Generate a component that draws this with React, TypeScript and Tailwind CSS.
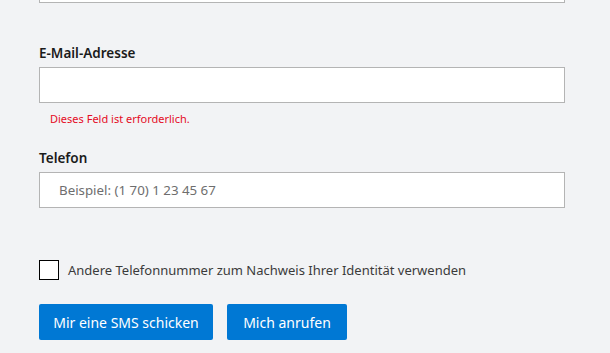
import React, { useState } from "react";

const App: React.FC = () => {
  const [email, setEmail] = useState("");
  const [phone, setPhone] = useState("");
  const [otherNumber, setOtherNumber] = useState(false);

  return (
    <div
      className="min-h-screen w-full bg-[#f2f3f5] text-[#1b1b1b]"
      style={{ fontFamily: '"Noto Sans", "Segoe UI", sans-serif' }}
    >
      <div className="ml-[39px] w-[526px]">
        {/* tail of the previous field */}
        <div className="h-[3px] border border-t-0 border-[#b4b4b4] bg-white" />

        <label className="mt-[40px] block text-[13.5px] font-semibold leading-[20px]">
          E-Mail-Adresse
        </label>
        <input
          type="email"
          value={email}
          onChange={(e) => setEmail(e.target.value)}
          className="mt-[4px] block h-[36px] w-full border border-[#b4b4b4] bg-white px-[18px] text-[13px] outline-none"
        />
        <p className="mt-[8px] pl-[11px] text-[11px] leading-[16px] text-[#e50b25]">
          Dieses Feld ist erforderlich.
        </p>

        <label className="mt-[21px] block text-[13.5px] font-semibold leading-[20px]">
          Telefon
        </label>
        <input
          type="tel"
          value={phone}
          onChange={(e) => setPhone(e.target.value)}
          placeholder="Beispiel: (1 70) 1 23 45 67"
          className="mt-[4px] block h-[36px] w-full border border-[#b4b4b4] bg-white px-[19px] text-[13.3px] outline-none placeholder:text-[#6e6e6e]"
        />

        <label className="mt-[52px] flex cursor-pointer items-center gap-[9px]">
          <input
            type="checkbox"
            checked={otherNumber}
            onChange={(e) => setOtherNumber(e.target.checked)}
            className="peer sr-only"
          />
          <span className="block h-[20px] w-[20px] border border-black bg-white" />
          <span className="text-[13px] leading-[20px] text-[#3b3b3b]">
            Andere Telefonnummer zum Nachweis Ihrer Identität verwenden
          </span>
        </label>

        <div className="mt-[24px] flex gap-[14px]">
          <button
            type="button"
            className="h-[36px] w-[174px] rounded-[2px] bg-[#0078d4] text-[14px] text-white hover:bg-[#106ebe]"
          >
            Mir eine SMS schicken
          </button>
          <button
            type="button"
            className="h-[36px] w-[120px] rounded-[2px] bg-[#0078d4] text-[14px] text-white hover:bg-[#106ebe]"
          >
            Mich anrufen
          </button>
        </div>
      </div>
    </div>
  );
};

export default App;
